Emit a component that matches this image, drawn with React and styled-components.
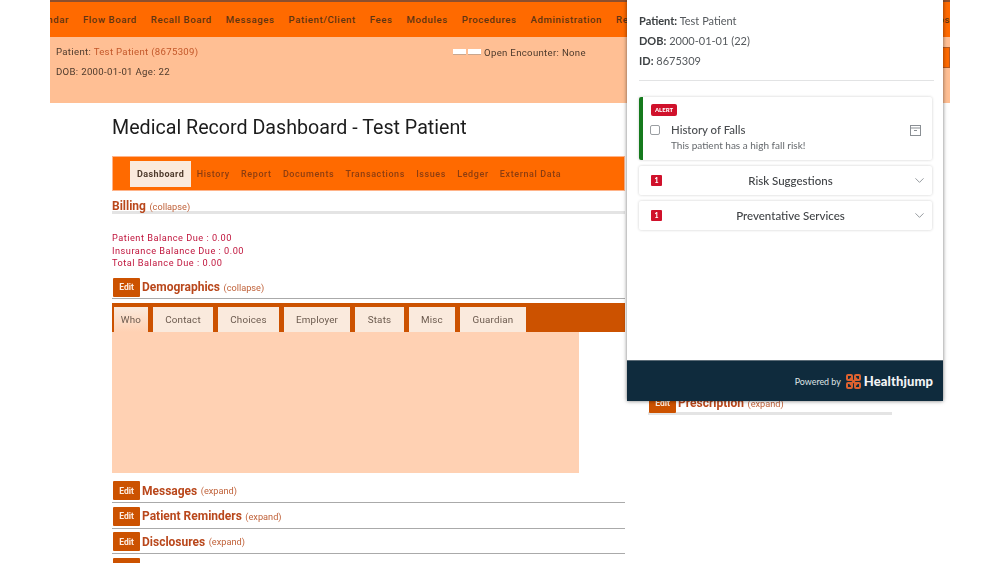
import React from "react";
import styled, { createGlobalStyle } from "styled-components";
import { ChevronDown } from "lucide-react";

const Global = createGlobalStyle`
  html, body { margin: 0; padding: 0; background: #fff; overflow: hidden; }
  body { font-family: Roboto, "Liberation Sans", sans-serif; }
`;

const navItems = ["Calendar", "Flow Board", "Recall Board", "Messages", "Patient/Client", "Fees", "Modules", "Procedures", "Administration", "Reports"];
const tabItems = ["Dashboard", "History", "Report", "Documents", "Transactions", "Issues", "Ledger", "External Data"];
const demoTabs = [["Who", 34], ["Contact", 60], ["Choices", 61], ["Employer", 66], ["Stats", 49], ["Misc", 46], ["Guardian", 66]];
const sections = ["Messages", "Patient Reminders", "Disclosures"];

function App() {
  return (
    <Stage>
      <Global />
      <TopNav>
        <NavList>
          {navItems.map((n) => <NavItem key={n}>{n}</NavItem>)}
          <LastNavItem>Popups</LastNavItem>
        </NavList>
      </TopNav>
      <PatientBar>
        <PatientInfo>
          <PatientLine>Patient: <PatientLink>Test Patient (8675309)</PatientLink></PatientLine>
          <PatientLine>DOB: 2000-01-01 Age: 22</PatientLine>
        </PatientInfo>
        <Encounter>
          <WhiteChip />
          <WhiteChip />
          <span>Open Encounter: None</span>
        </Encounter>
        <HiddenButton />
      </PatientBar>
      <Content>
        <LeftColumn>
          <Title>Medical Record Dashboard - Test Patient</Title>
          <TabBar>
            {tabItems.map((t, i) => <TabItem key={t} $active={i === 0}>{t}</TabItem>)}
          </TabBar>
          <BillingHead>
            <SectionName>Billing</SectionName><Toggle>(collapse)</Toggle>
          </BillingHead>
          <Balances>
            <div>Patient Balance Due : 0.00</div>
            <div>Insurance Balance Due : 0.00</div>
            <div>Total Balance Due : 0.00</div>
          </Balances>
          <SectionRow $first>
            <EditButton>Edit</EditButton>
            <SectionName>Demographics</SectionName>
            <Toggle>(collapse)</Toggle>
          </SectionRow>
          <DemoTabs>
            {demoTabs.map(([t, w], i) => <DemoTab key={t} $w={w} $active={i === 0}>{t}</DemoTab>)}
          </DemoTabs>
          <DemoBody />
          <Sections>
            {sections.map((s) => (
              <SectionRow key={s}>
                <EditButton>Edit</EditButton>
                <SectionName>{s}</SectionName>
                <Toggle>(expand)</Toggle>
              </SectionRow>
            ))}
            <SectionRow>
              <EditButton>Edit</EditButton>
            </SectionRow>
          </Sections>
        </LeftColumn>
        <RightColumn>
          <PrescriptionRow>
            <EditButton>Edit</EditButton>
            <SectionName>Prescription</SectionName>
            <Toggle>(expand)</Toggle>
          </PrescriptionRow>
        </RightColumn>
      </Content>

      <Popup>
        <PopupBody>
          <InfoLine><b>Patient:</b> Test Patient</InfoLine>
          <InfoLine><b>DOB:</b> 2000-01-01 (22)</InfoLine>
          <InfoLine><b>ID:</b> 8675309</InfoLine>
          <Divider />
          <AlertCard>
            <AlertBadge>ALERT</AlertBadge>
            <AlertRow>
              <Check />
              <AlertText>
                <AlertTitle>History of Falls</AlertTitle>
                <AlertDesc>This patient has a high fall risk!</AlertDesc>
              </AlertText>
              <svg width="11" height="11" viewBox="0 0 11 11" fill="none" stroke="#8a8f94" strokeWidth="1">
                <rect x="0.5" y="0.5" width="10" height="10" />
                <path d="M0.5 3h10M4 5.5h3" />
              </svg>
            </AlertRow>
          </AlertCard>
          <Accordion>
            <CountBadge>1</CountBadge>
            <AccordionTitle>Risk Suggestions</AccordionTitle>
            <ChevronDown size={15} color="#7d8389" strokeWidth={1.3} />
          </Accordion>
          <Accordion>
            <CountBadge>1</CountBadge>
            <AccordionTitle>Preventative Services</AccordionTitle>
            <ChevronDown size={15} color="#7d8389" strokeWidth={1.3} />
          </Accordion>
        </PopupBody>
        <PopupFooter>
          <PoweredBy>Powered by</PoweredBy>
          <svg width="15" height="15" viewBox="0 0 15 15" fill="none" stroke="#dd6230" strokeWidth="2">
            <rect x="1" y="1" width="5" height="5" rx="1" />
            <rect x="9" y="1" width="5" height="5" rx="1" />
            <rect x="1" y="9" width="5" height="5" rx="1" />
            <rect x="9" y="9" width="5" height="5" rx="1" />
            <path d="M4 4l7 7M11 4l-7 7" />
          </svg>
          <Brand>Healthjump</Brand>
        </PopupFooter>
      </Popup>
    </Stage>
  );
}

const Stage = styled.div`
  position: relative;
  width: 900px;
  height: 563px;
  margin: 0 auto;
  overflow: hidden;
  filter: blur(0.7px);
`;

const TopNav = styled.nav`
  height: 35px;
  border-top: 2px solid #8c4f2e;
  background: #ff6a00;
  overflow: hidden;
`;

const NavList = styled.div`
  display: flex;
  align-items: center;
  gap: 14px;
  width: calc(100% + 24px);
  height: 35px;
  margin-left: -24px;
  white-space: nowrap;
`;

const NavItem = styled.span`
  font-size: 9.6px;
  font-weight: 500;
  letter-spacing: 0.58px;
  color: #5f3414;
`;

const LastNavItem = styled(NavItem)`
  margin-left: auto;
`;

const PatientBar = styled.div`
  display: flex;
  align-items: flex-start;
  height: 66px;
  background: #ffbf94;
  font-size: 9.6px;
  letter-spacing: 0.32px;
  color: #4d3a2c;
`;

const PatientInfo = styled.div`
  width: 403px;
  padding: 9px 0 0 6px;
  box-sizing: border-box;
`;

const PatientLine = styled.div`
  height: 20px;
  line-height: 12px;
`;

const PatientLink = styled.span`
  color: #c4582a;
`;

const Encounter = styled.div`
  display: flex;
  align-items: center;
  gap: 2px;
  height: 12px;
  margin-top: 9px;
  span { margin-left: 1px; }
`;

const WhiteChip = styled.i`
  display: block;
  width: 13px;
  height: 5px;
  background: #fff;
  border: 0 solid #c9a78f;
  border-width: 0 0 1px;
`;

const HiddenButton = styled.div`
  width: 60px;
  height: 21px;
  margin: 10px 0 0 auto;
  background: #ff6a00;
  border: 1px solid #b85a20;
  box-sizing: border-box;
`;

const Content = styled.main`
  display: flex;
  gap: 23px;
  padding-left: 62px;
`;

const LeftColumn = styled.div`
  width: 513px;
  flex-shrink: 0;
`;

const RightColumn = styled.div`
  width: 244px;
  flex-shrink: 0;
  padding-top: 291px;
`;

const Title = styled.h1`
  margin: 0;
  padding-top: 14px;
  height: 39px;
  font-size: 19.65px;
  line-height: 22px;
  font-weight: 400;
  color: #1c1c1c;
`;

const TabBar = styled.div`
  display: flex;
  align-items: center;
  gap: 5.5px;
  height: 35px;
  padding-left: 18px;
  background: #ff6a00;
  box-shadow: 0 0 0 1px #ffb48a inset;
`;

const TabItem = styled.span`
  display: flex;
  align-items: center;
  height: ${(p) => (p.$active ? "26px" : "auto")};
  padding: ${(p) => (p.$active ? "0 7px" : "0")};
  margin-right: ${(p) => (p.$active ? "0" : "5.7px")};
  background: ${(p) => (p.$active ? "#faeadd" : "transparent")};
  font-size: 9px;
  font-weight: ${(p) => (p.$active ? 700 : 500)};
  letter-spacing: ${(p) => (p.$active ? "0.4px" : "0.6px")};
  color: ${(p) => (p.$active ? "#4d3a2c" : "#8c3d10")};
  white-space: nowrap;
`;

const BillingHead = styled.div`
  height: 20px;
  padding-top: 7px;
  box-sizing: border-box;
  line-height: 14px;
  box-shadow: 0 3px 0 #e4e4e4;
`;

const SectionName = styled.span`
  font-size: 12px;
  font-weight: 700;
  color: #b9471b;
  white-space: nowrap;
`;

const Toggle = styled.span`
  font-size: 9.2px;
  color: #c0623a;
  margin-left: 3.5px;
  white-space: nowrap;
`;

const Balances = styled.div`
  padding-top: 21px;
  font-size: 9.2px;
  line-height: 12.6px;
  letter-spacing: 0.5px;
  color: #c0143c;
`;

const SectionRow = styled.div`
  display: flex;
  align-items: center;
  height: ${(p) => (p.$first ? "23px" : "23.5px")};
  margin: ${(p) => (p.$first ? "6.5px 0 0" : "0 0 2px")};
  border-bottom: 1px solid #aaa;
  box-sizing: border-box;
`;

const EditButton = styled.span`
  display: flex;
  align-items: center;
  justify-content: center;
  width: 27px;
  height: 19px;
  margin: 0 2px 0 1px;
  flex-shrink: 0;
  border-radius: 1px;
  background: #cc5200;
  color: #fdeee2;
  font-size: 8.5px;
  font-weight: 700;
`;

const DemoTabs = styled.div`
  display: flex;
  align-items: flex-end;
  gap: 5px;
  height: 29px;
  margin-top: 4px;
  padding-left: 2px;
  background: #cc5200;
`;

const DemoTab = styled.span`
  display: flex;
  align-items: center;
  justify-content: center;
  width: ${(p) => p.$w}px;
  height: 25px;
  background: ${(p) => (p.$active ? "linear-gradient(#faeadd, #ffd1b3)" : "#faeadd")};
  font-size: 9.8px;
  letter-spacing: 0.2px;
  color: #6b5a4e;
`;

const DemoBody = styled.div`
  width: 467px;
  height: 141px;
  background: #ffd1b3;
`;

const Sections = styled.div`
  padding-top: 6.25px;
`;

const PrescriptionRow = styled.div`
  display: flex;
  align-items: center;
  height: 18px;
  box-shadow: 0 3px 0 #e4e4e4;
`;

const Popup = styled.aside`
  position: absolute;
  top: 0;
  left: 577px;
  width: 316px;
  height: 401px;
  display: flex;
  flex-direction: column;
  background: #fff;
  box-shadow: 0 0 4px rgba(0, 0, 0, 0.55);
  font-family: Lato, "Noto Sans", sans-serif;
`;

const PopupBody = styled.div`
  flex: 1;
  padding: 11px 9px 0 12px;
`;

const InfoLine = styled.div`
  height: 20px;
  font-size: 11px;
  line-height: 20px;
  color: #55595d;
  b { font-weight: 700; color: #3c4043; }
`;

const Divider = styled.div`
  height: 1px;
  margin: 9px 0 16px;
  background: #e2e3e4;
`;

const AlertCard = styled.div`
  width: 293px;
  height: 63px;
  box-sizing: border-box;
  padding: 7px 11px 0 7px;
  border-left: 4px solid #157a1d;
  border-radius: 2px;
  box-shadow: 0 0 3px rgba(0, 0, 0, 0.2);
`;

const AlertBadge = styled.span`
  display: block;
  width: 26px;
  height: 12px;
  margin-left: 1px;
  border-radius: 2px;
  background: #d0112b;
  color: #fff;
  font-size: 6px;
  font-weight: 900;
  line-height: 12px;
  text-align: center;
`;

const AlertRow = styled.div`
  display: flex;
  align-items: flex-start;
  margin-top: 7px;
  svg { margin-top: 2px; }
`;

const Check = styled.span`
  width: 8px;
  height: 8px;
  margin: 2px 11px 0 0;
  border: 1px solid #9a9ea2;
  border-radius: 2px;
  flex-shrink: 0;
`;

const AlertText = styled.div`
  flex: 1;
`;

const AlertTitle = styled.div`
  font-size: 11.4px;
  font-weight: 500;
  line-height: 14px;
  color: #4a4d50;
`;

const AlertDesc = styled.div`
  margin-top: 3px;
  font-size: 10px;
  line-height: 11px;
  color: #64686c;
`;

const Accordion = styled.div`
  display: flex;
  align-items: center;
  width: 293px;
  height: 29px;
  box-sizing: border-box;
  margin-top: 6px;
  padding: 0 5px 0 12px;
  border-radius: 2px;
  box-shadow: 0 0 3px rgba(0, 0, 0, 0.2);
`;

const CountBadge = styled.span`
  width: 11px;
  height: 11px;
  border-radius: 1px;
  background: #d0112b;
  color: #fff;
  font-size: 7px;
  font-weight: 900;
  line-height: 11px;
  text-align: center;
`;

const AccordionTitle = styled.span`
  flex: 1;
  padding-left: 7px;
  text-align: center;
  font-size: 11.5px;
  font-weight: 500;
  color: #3f4245;
`;

const PopupFooter = styled.footer`
  display: flex;
  align-items: center;
  justify-content: flex-end;
  height: 41px;
  padding-right: 10px;
  background: #0f2b3d;
  border-top: 1px solid #5b6b76;
  box-sizing: border-box;
`;

const PoweredBy = styled.span`
  margin-right: 5px;
  font-size: 8.9px;
  color: #dfe3e6;
`;

const Brand = styled.span`
  margin-left: 3px;
  font-size: 13px;
  font-weight: 900;
  letter-spacing: 0.1px;
  color: #f2f4f5;
`;

export default App;
